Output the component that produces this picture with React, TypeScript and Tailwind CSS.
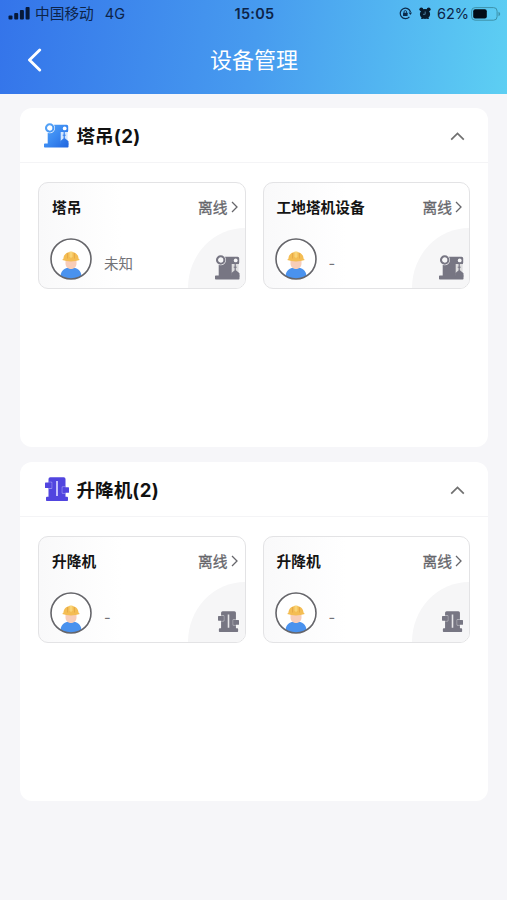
import type { ReactNode } from "react";

type IconKind = "tower" | "lift";

type Device = {
  name: string;
  operator: string;
};

type Group = {
  title: string;
  kind: IconKind;
  devices: Device[];
};

const groups: Group[] = [
  {
    title: "塔吊",
    kind: "tower",
    devices: [
      { name: "塔吊", operator: "未知" },
      { name: "工地塔机设备", operator: "-" },
    ],
  },
  {
    title: "升降机",
    kind: "lift",
    devices: [
      { name: "升降机", operator: "-" },
      { name: "升降机", operator: "-" },
    ],
  },
];

function TowerIcon({ muted = false }: { muted?: boolean }) {
  const fill = muted ? "#777683" : "url(#tower-blue)";
  const back = muted ? "#f6f6f7" : "#ffffff";
  const inset = muted ? "#dededf" : "#d3e6fd";
  return (
    <svg width="25" height="25" viewBox="0 0 25 25" fill="none" className="block shrink-0">
      <defs>
        <linearGradient id="tower-blue" x1="0" y1="0" x2="25" y2="25" gradientUnits="userSpaceOnUse">
          <stop stopColor="#5aa9f8" />
          <stop offset="0.5" stopColor="#3b8af2" />
          <stop offset="1" stopColor="#1f63dd" />
        </linearGradient>
      </defs>
      <path d="M6 1.800h16.700A1.500 1.500 0 0 1 24.200 3.300v4.400a1.500 1.500 0 0 1-1.500 1.500H17v11.300h7.500v3.300a.8.8 0 0 1-.8.8H.8a.8.8 0 0 1-.8-.8v-2.500a.8.8 0 0 1 .8-.8H3.700V8z" fill={fill} />
      <path d="M16.700 9h6.900v11.500h-6.900z" fill={inset} />
      <circle cx="5.700" cy="5" r="5.300" fill={back} />
      <circle cx="5.700" cy="5" r="3.700" fill={back} stroke={fill} strokeWidth="2.100" />
      <circle cx="20.700" cy="5.400" r="1.900" fill={back} />
      <path d="M20.200 9v6.500" stroke={fill} strokeWidth="1.200" />
      <path d="M18.700 12.200h3" stroke={fill} strokeWidth="1" />
      <path d="M20.300 14.700l4.200 3.500v3.300h-8.300v-3.300z" fill={fill} />
    </svg>
  );
}

function LiftIcon({ muted = false }: { muted?: boolean }) {
  const fill = muted ? "#777683" : "#5145df";
  const outline = muted ? "#c9c9cd" : "#a39cf5";
  const slot = muted ? "#e6e6e8" : "#d2ceff";
  const size = muted ? 21 : 24;
  return (
    <svg width={size} height={size} viewBox="0 0 24 24" fill="none" className="block shrink-0">
      <path d="M5.300.3h13.400A1.800 1.800 0 0 1 20.500 2.100v17.600H22a1 1 0 0 1 1 1v2.500a.8.8 0 0 1-.8.8H1.800a.8.8 0 0 1-.8-.8v-2.500a1 1 0 0 1 1-1h1.500V2.100A1.800 1.800 0 0 1 5.300.3z" fill={fill} />
      <path d="M3.500 5.200h3.300v6.300H3.500M20.500 9.800h-3.300v6.500h3.300" stroke={outline} strokeWidth=".8" />
      <rect x="0" y="5.600" width="6.400" height="5.400" rx=".6" fill={fill} />
      <rect x="17.600" y="10.200" width="6.400" height="5.600" rx=".6" fill={fill} />
      <path d="M12 4v15" stroke={slot} strokeWidth="1.800" />
    </svg>
  );
}

function GroupIcon({ kind, muted }: { kind: IconKind; muted?: boolean }) {
  return kind === "tower" ? <TowerIcon muted={muted} /> : <LiftIcon muted={muted} />;
}

function WorkerAvatar() {
  return (
    <svg width="42" height="42" viewBox="0 0 42 42" className="block shrink-0">
      <circle cx="21" cy="21" r="20" fill="#fff" />
      <path d="M10.500 38.200c.3-5.700 4-8.700 10.500-8.700s10.200 3 10.500 8.700C28.500 40.300 25 41 21 41s-7.500-.7-10.500-2.800z" fill="#4a92ee" />
      <path d="M15.500 22h11v3.500c0 3.300-2.500 5.500-5.500 5.500s-5.500-2.200-5.500-5.500z" fill="#f8cdb8" />
      <path d="M13.500 20.500c0-4 3.100-6.600 7.500-6.600s7.500 2.600 7.500 6.600l1.300 1.600c-5.500 1.800-12.100 1.800-17.600 0z" fill="#f4bd53" />
      <path d="M19.500 13.500h3v5l-1.500 1.800-1.500-1.800z" fill="#f9d477" />
      <path d="M17.500 15v5.500M24.500 15v5.500" stroke="#dfa343" strokeWidth=".7" />
      <circle cx="21" cy="21" r="20" fill="none" stroke="#65656a" strokeWidth="1.600" />
    </svg>
  );
}

function StatusBar() {
  return (
    <div className="grid h-7 grid-cols-[1fr_auto_1fr] items-center pr-[6px] pl-2 text-[14px] leading-none text-[#0d2449]">
      <div className="flex items-center">
        <svg width="22" height="13" viewBox="0 0 22 13" className="-mt-px block" fill="#071939">
          <rect x="0.500" y="8.500" width="4" height="4" rx="1" />
          <rect x="6.200" y="6" width="4" height="6.500" rx="1" />
          <rect x="11.900" y="3" width="4" height="9.500" rx="1" />
          <rect x="17.600" y="0" width="4" height="12.500" rx="1" />
        </svg>
        <span className="ml-[5px] text-[14.700px]">中国移动</span>
        <span className="ml-[11px] text-[14.500px]">4G</span>
      </div>
      <span className="text-[14.500px] font-semibold tracking-[0.300px]">15:05</span>
      <div className="flex items-center justify-end">
        <svg width="13" height="13" viewBox="0 0 13 13" className="-mt-px block" fill="none" stroke="#0d2b4b">
          <path d="M10.400 9.800A5.200 5.200 0 1 1 11.500 5" strokeWidth="1.200" />
          <path d="M9.600 5.600h3.400l-1.600 2.500z" fill="#0d2b4b" stroke="none" />
          <rect x="4" y="5.700" width="4.600" height="3.400" rx=".5" fill="#0d2b4b" stroke="none" />
          <path d="M5 6V4.900a1.300 1.300 0 0 1 2.600 0V6" strokeWidth=".9" />
        </svg>
        <svg width="12" height="13" viewBox="0 0 12 13" className="-mt-px ml-[7px] block" fill="#071a2c">
          <circle cx="6" cy="7" r="5.100" />
          <circle cx="2.300" cy="2.300" r="1.900" />
          <circle cx="9.700" cy="2.300" r="1.900" />
          <path d="M2.500 11.500l1-1 .7.700zM9.500 11.500l-1-1-.7.700z" stroke="#071a2c" />
          <path d="M6.200 4.500v2.800H4" fill="none" stroke="#5c93b8" strokeWidth=".8" />
        </svg>
        <span className="ml-[6px] text-[14.500px]">62%</span>
        <svg width="30" height="14" viewBox="0 0 30 14" className="-mt-px ml-[2px] block" fill="none">
          <rect x=".6" y=".6" width="25.500" height="12.600" rx="3.500" stroke="#3d91a9" strokeWidth="1" />
          <rect x="2.200" y="2.200" width="13.600" height="9.400" rx="2" fill="#020c16" />
          <path d="M27.500 4.800c2.200.8 2.200 3.600 0 4.400z" fill="#3d91a9" />
        </svg>
      </div>
    </div>
  );
}

function Header({ children }: { children: ReactNode }) {
  return (
    <header className="h-[94px] bg-[linear-gradient(98deg,#3474ea_0%,#479bef_50%,#5dcff3_100%)]">
      <StatusBar />
      <div className="grid h-16 grid-cols-[60px_1fr_60px] items-center">
        <button className="ml-[27px] w-4" aria-label="返回">
          <svg width="15" height="24" viewBox="0 0 15 24" className="block" fill="none">
            <path d="M12.700 2L2.500 12l10.200 10" stroke="#fff" strokeWidth="2.900" strokeLinecap="round" strokeLinejoin="round" />
          </svg>
        </button>
        <h1 className="pl-px text-center text-[22px] leading-none text-white">{children}</h1>
      </div>
    </header>
  );
}

function DeviceCard({ device, kind }: { device: Device; kind: IconKind }) {
  return (
    <div className="relative h-[107px] overflow-hidden rounded-[10px] border border-[#e3e3e5] bg-linear-to-r from-[#f9f9fa] to-white to-40%">
      <div className="absolute right-0 bottom-0 flex h-[60px] w-[57px] items-end justify-end rounded-tl-[100%] bg-[#f6f6f7]">
        <div className={kind === "tower" ? "mr-[5px] mb-[8px]" : "mr-[6px] mb-[10px]"}>
          <GroupIcon kind={kind} muted />
        </div>
      </div>
      <div className="flex h-[50px] items-center justify-between pr-[7px] pl-[13px]">
        <span className="text-[14.700px] font-bold text-[#141414]">{device.name}</span>
        <div className="flex items-center text-[14.700px] text-[#66666b] [-webkit-text-stroke:0.300px_#66666b]">
          离线
          <svg width="7" height="12" viewBox="0 0 7 12" className="-mt-px ml-[3px] block" fill="none">
            <path d="M1 1l5 5-5 5" stroke="#66666b" strokeWidth="1.300" />
          </svg>
        </div>
      </div>
      <div className="flex items-center pt-[5px] pl-[11px]">
        <WorkerAvatar />
        <span className="mt-[10px] ml-[12px] text-[14.500px] leading-5 text-[#737377]">{device.operator}</span>
      </div>
    </div>
  );
}

function GroupPanel({ group }: { group: Group }) {
  return (
    <section className="h-[339px] rounded-xl bg-white">
      <div className="flex h-[55px] items-center border-b border-[#f4f4f6] pr-[23px] pl-6">
        <div className={group.kind === "tower" ? "mr-[7px]" : "mr-[7px] ml-px"}>
          <GroupIcon kind={group.kind} />
        </div>
        <h2 className="pt-[3px] pl-[0.500px] text-[18.600px] font-bold text-[#111]">
          {group.title}
          <span className="tracking-[0.400px]">({group.devices.length})</span>
        </h2>
        <svg width="15" height="9" viewBox="0 0 15 9" className="mt-[2px] ml-auto block" fill="none">
          <path d="M1.200 7.700l6.300-6.200 6.300 6.200" stroke="#707070" strokeWidth="1.700" />
        </svg>
      </div>
      <div className="grid grid-cols-2 gap-[17px] px-[18px] pt-[19px]">
        {group.devices.map((device, i) => (
          <DeviceCard key={i} device={device} kind={group.kind} />
        ))}
      </div>
    </section>
  );
}

export default function App() {
  return (
    <div className="min-h-screen bg-[#f6f6f9] font-[Inter,'Noto_Sans_CJK_SC',sans-serif]">
      <Header>设备管理</Header>
      <main className="flex flex-col gap-[15px] pt-[14px] pr-[19px] pl-5">
        {groups.map((group) => (
          <GroupPanel key={group.title} group={group} />
        ))}
      </main>
    </div>
  );
}
